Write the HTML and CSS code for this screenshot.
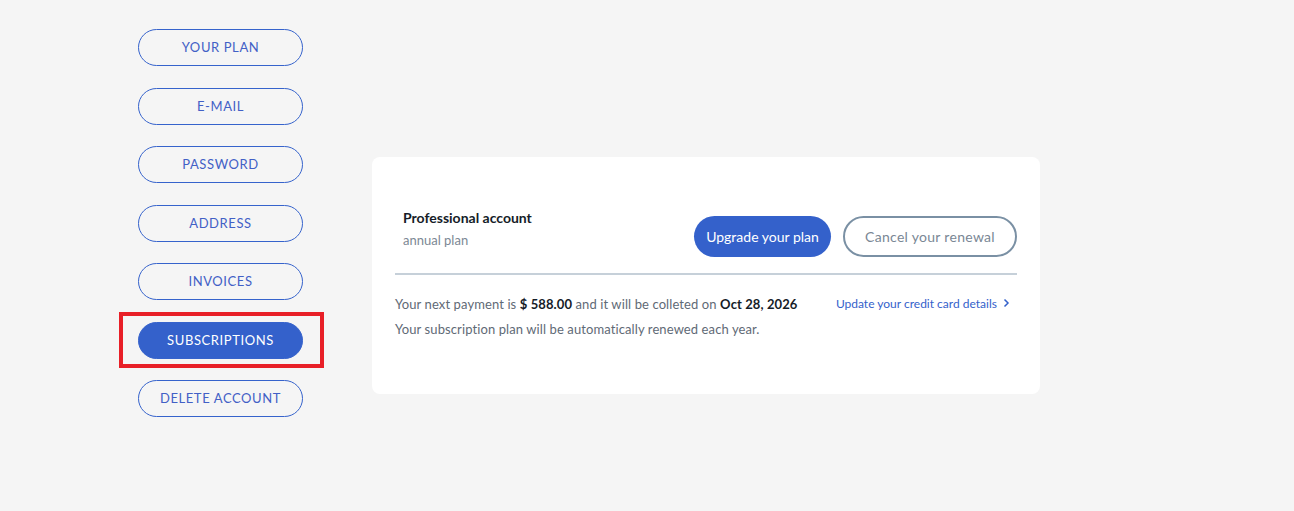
FILE: index.html
```html
<!DOCTYPE html>
<html>
<head>
    <link rel="stylesheet" href="styles.css">
</head>
<body>
    <div class="page">
        <nav class="side-menu">
            <a class="menu-btn">YOUR PLAN</a>
            <a class="menu-btn">E-MAIL</a>
            <a class="menu-btn">PASSWORD</a>
            <a class="menu-btn">ADDRESS</a>
            <a class="menu-btn">INVOICES</a>
            <a class="menu-btn active marked">SUBSCRIPTIONS</a>
            <a class="menu-btn">DELETE ACCOUNT</a>
        </nav>

        <section class="plan-card">
            <div class="plan-head">
                <div class="plan-name">
                    <div class="plan-title">Professional account</div>
                    <div class="plan-sub">annual plan</div>
                </div>
                <div class="plan-actions">
                    <button class="btn btn-primary">Upgrade your plan</button>
                    <button class="btn btn-outline">Cancel your renewal</button>
                </div>
            </div>
            <div class="plan-body">
                <div class="plan-row">
                    <span>Your next payment is <strong>$ 588.00</strong> and it will be colleted on <strong>Oct 28, 2026</strong></span>
                    <a class="card-link">Update your credit card details
                        <svg width="8" height="10" viewBox="0 0 8 10"><path d="M2.5 1.5 L6 5 L2.5 8.5" fill="none" stroke="#3461cb" stroke-width="1.5"/></svg>
                    </a>
                </div>
                <div class="plan-row">Your subscription plan will be automatically renewed each year.</div>
            </div>
        </section>
    </div>
</body>
</html>
```

FILE: styles.css
```css
body {
    margin: 0;
    background: #f5f5f5;
    font-family: Lato, "Open Sans", Arial, sans-serif;
}
.page {
    display: flex;
    align-items: flex-start;
    padding: 29px 0 0 138px;
    gap: 69px;
}
.side-menu {
    display: flex;
    flex-direction: column;
    gap: 21.5px;
}
.menu-btn {
    display: block;
    width: 165px;
    height: 37px;
    box-sizing: border-box;
    border: 1px solid #3663cc;
    border-radius: 19px;
    text-align: center;
    line-height: 35px;
    font-size: 13px;
    letter-spacing: 0.6px;
    color: #4260c6;
    position: relative;
}
.menu-btn.active {
    background: #3461cb;
    color: white;
}
.marked::after {
    content: "";
    position: absolute;
    top: -11px;
    bottom: -10px;
    left: -20px;
    right: -22px;
    border: 4px solid #e81f27;
}

.plan-card {
    margin-top: 128px;
    width: 668px;
    height: 237px;
    box-sizing: border-box;
    background: white;
    border-radius: 8px;
    padding: 52px 23px 0 23px;
}
.plan-head {
    display: flex;
    justify-content: space-between;
    align-items: flex-start;
    padding: 0 0 16px 8px;
    border-bottom: 2px solid #c6d0d9;
}
.plan-title {
    font-size: 14px;
    font-weight: bold;
    color: #151c28;
}
.plan-sub {
    font-size: 13px;
    color: #7c8894;
    margin-top: 6px;
}
.plan-actions {
    display: flex;
    gap: 12px;
    margin-top: 7px;
}
.btn {
    height: 41px;
    border-radius: 21px;
    font-family: inherit;
    font-size: 14px;
    box-sizing: border-box;
}
.btn-primary {
    width: 137px;
    background: #3461cb;
    color: white;
    border: none;
}
.btn-outline {
    width: 174px;
    background: white;
    color: #7a8795;
    border: 2px solid #7a90a4;
    letter-spacing: 0.3px;
}
.plan-body {
    padding-top: 16px;
    font-size: 13px;
    letter-spacing: 0.1px;
    color: #5f6a76;
}
.plan-row {
    display: flex;
    justify-content: space-between;
    align-items: center;
    height: 25px;
}
.plan-row strong {
    color: #151c28;
}
.card-link {
    font-size: 12px;
    letter-spacing: 0;
    color: #3461cb;
    margin-right: 7px;
}
.card-link svg {
    margin-left: 2px;
}
```
